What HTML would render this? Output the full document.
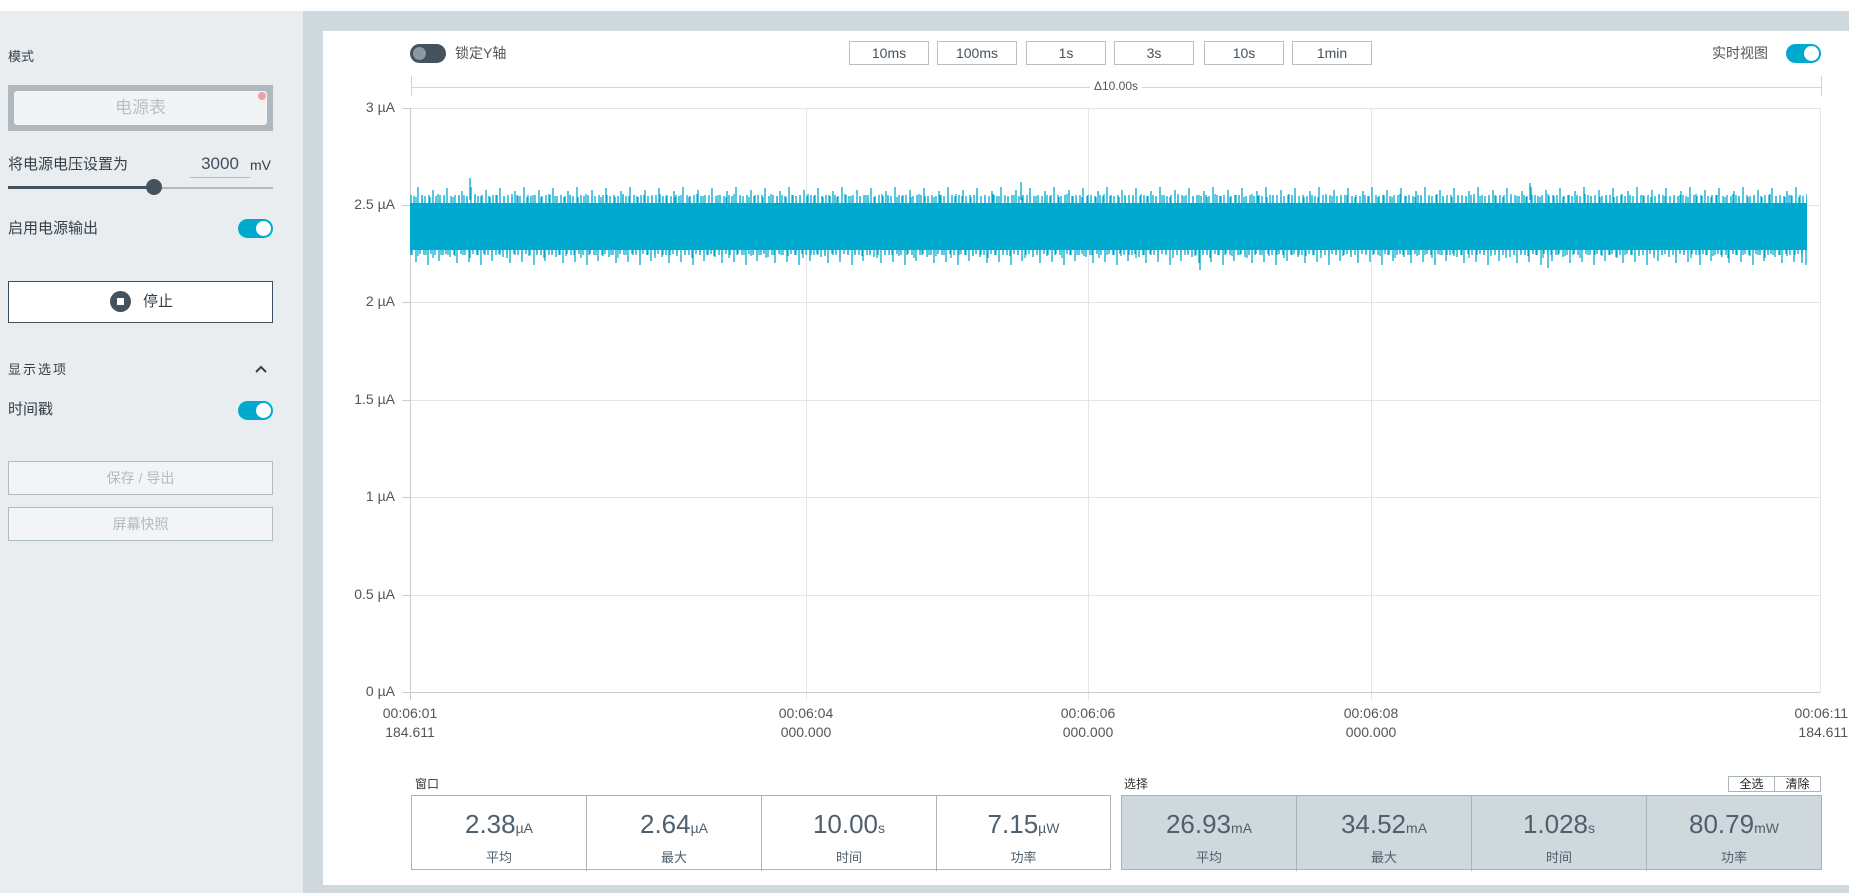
<!DOCTYPE html>
<html><head><meta charset="utf-8"><style>
*{margin:0;padding:0;box-sizing:border-box}
body{width:1849px;height:893px;position:relative;overflow:hidden;background:#cfd8dd;font-family:"Liberation Sans","Noto Sans CJK SC",sans-serif;color:#333f48}
.a{position:absolute}
.top{left:0;top:0;width:1849px;height:11px;background:#fff}
.left{left:0;top:11px;width:303px;height:882px;background:#e9edf0}
.card{left:323px;top:31px;width:1526px;height:854px;background:#fff}
.lbl{font-size:15px;color:#333f48;line-height:20px}
.tg{width:35px;height:19px;border-radius:10px;background:#00a9ce}
.tg::after{content:"";position:absolute;right:2px;top:2px;width:15px;height:15px;border-radius:50%;background:#fff}
.btn{border:1px solid #b0bcc4;background:#f2f4f6;color:#b3bac0;font-size:14px;text-align:center}
.tb{top:41px;width:80px;height:24px;border:1px solid #b5c0c7;font-size:14px;text-align:center;line-height:22px;color:#44525e}
.yl{font-size:14px;color:#555;text-align:right;width:60px;left:335px}
.xl{font-size:14px;color:#555;text-align:center;width:90px;line-height:19px}
.cell{position:absolute;top:0;height:75px;text-align:center;color:#4f5f6c}
.cell b{font-weight:normal;font-size:26px;display:block;margin-top:13px;line-height:30px}
.cell b i{font-style:normal;font-size:14px}
.cell span{font-size:13px;display:block;margin-top:4px}
</style></head><body>
<div class="a top"></div>
<div class="a left"></div>
<div class="a lbl" style="left:8px;top:47px;font-size:13px">模式</div>
<div class="a" style="left:8px;top:85px;width:265px;height:46px;background:#b0b8bf"></div>
<div class="a" style="left:14px;top:91px;width:253px;height:34px;background:#f1f3f5;border-radius:3px;text-align:center;line-height:34px;color:#b8bfc5;font-size:17px">电源表</div>
<div class="a" style="left:258px;top:92px;width:8px;height:8px;border-radius:50%;background:#eea0a4"></div>
<div class="a lbl" style="left:8px;top:155px">将电源电压设置为</div>
<div class="a" style="left:190px;top:153px;width:60px;text-align:center;font-size:17px;color:#44525e;line-height:22px">3000</div>
<div class="a" style="left:190px;top:177px;width:60px;height:1px;background:#b5bec5"></div>
<div class="a lbl" style="left:250px;top:155px;font-size:14px">mV</div>
<div class="a" style="left:8px;top:186px;width:146px;height:3px;background:#44525e"></div>
<div class="a" style="left:154px;top:187px;width:119px;height:2px;background:#b0bac1"></div>
<div class="a" style="left:146px;top:179px;width:16px;height:16px;border-radius:50%;background:#44525e"></div>
<div class="a lbl" style="left:8px;top:219px">启用电源输出</div>
<div class="a tg" style="left:238px;top:219px"></div>
<div class="a" style="left:8px;top:281px;width:265px;height:42px;border:1px solid #3d4f5e;background:#fff"></div>
<div class="a" style="left:110px;top:291px;width:21px;height:21px;border-radius:50%;background:#44525e"></div>
<div class="a" style="left:117px;top:298px;width:7px;height:7px;background:#fff"></div>
<div class="a lbl" style="left:143px;top:292px">停止</div>
<div class="a lbl" style="left:8px;top:360px;font-size:13px;letter-spacing:2px">显示选项</div>
<svg class="a" style="left:254px;top:364px" width="14" height="10"><path d="M2 8L7 3L12 8" stroke="#333f48" stroke-width="2" fill="none"/></svg>
<div class="a lbl" style="left:8px;top:400px">时间戳</div>
<div class="a tg" style="left:238px;top:401px"></div>
<div class="a btn" style="left:8px;top:461px;width:265px;height:34px;line-height:32px">保存 / 导出</div>
<div class="a btn" style="left:8px;top:507px;width:265px;height:34px;line-height:32px">屏幕快照</div>
<div class="a card"></div>
<div class="a" style="left:410px;top:44px;width:36px;height:19px;border-radius:10px;background:#44525e"></div>
<div class="a" style="left:413px;top:47px;width:13px;height:13px;border-radius:50%;background:#8a989f"></div>
<div class="a lbl" style="left:455px;top:43px;color:#555;font-size:14px">锁定Y轴</div>
<div class="a tb" style="left:849px">10ms</div>
<div class="a tb" style="left:937px">100ms</div>
<div class="a tb" style="left:1026px">1s</div>
<div class="a tb" style="left:1114px">3s</div>
<div class="a tb" style="left:1204px">10s</div>
<div class="a tb" style="left:1292px">1min</div>
<div class="a lbl" style="left:1712px;top:43px;color:#555;font-size:14px">实时视图</div>
<div class="a tg" style="left:1786px;top:44px"></div>
<svg class="a" style="left:0;top:0" width="1849" height="893">
 <defs>
  <pattern id="pt" patternUnits="userSpaceOnUse" width="53" height="80" x="410" y="185">
   <g stroke="#00a9ce" stroke-width="1.3">
   <path d="M1 10V20M4 11V20M8 2V20M12 10V20M15 11V20M19 10V20M23 5V20M26 11V20M30 10V20M34 10V20M37 3V20M41 11V20M45 10V20M49 11V20M52 6V20"/>
   <path d="M2 60V70M6 60V77M10 60V69M14 60V70M18 60V80M21 60V69M25 60V70M29 60V76M33 60V70M36 60V69M40 60V72M44 60V70M47 60V78M51 60V69"/>
   </g>
  </pattern>
  <pattern id="pt2" patternUnits="userSpaceOnUse" width="37" height="80" x="413" y="185">
   <g stroke="#00a9ce" stroke-width="1.2">
   <path d="M3 12V20M9 10V20M17 12V20M25 9V20M31 11V20"/>
   <path d="M5 60V71M13 60V70M20 60V73M28 60V70M35 60V70"/>
   </g>
  </pattern>
 </defs>
 <g stroke="#e3e6e8" stroke-width="1">
  <path d="M410 108.5H1820M410 205.5H1820M410 302.5H1820M410 400.5H1820M410 497.5H1820M410 595.5H1820"/>
  <path d="M806.5 108V700M1088.5 108V700M1371.5 108V700M1820.5 108V692"/>
 </g>
 <path d="M402 108.5H410M402 205.5H410M402 302.5H410M402 400.5H410M402 497.5H410M402 595.5H410M402 692.5H410" stroke="#ccc"/>
 <path d="M410 692.5H1820M410.5 108V700" stroke="#ccc"/>
 <path d="M411 87.5H1090M1142 87.5H1821M411.5 76V96M1821.5 76V96" stroke="#cfd6db"/>
 <rect x="410" y="203" width="1397" height="47" fill="#00a9ce"/>
 <rect x="410" y="185" width="1397" height="80" fill="url(#pt)"/>
 <rect x="410" y="185" width="1397" height="80" fill="url(#pt2)"/>
 <path d="M470 178V200M1021 182V200M1530 183V200M1200 250V270M1548 250V268M1802 248V263" stroke="#00a9ce" stroke-width="1.3"/>
</svg>
<div class="a" style="left:1090px;top:79px;width:52px;text-align:center;font-size:12px;color:#555">Δ10.00s</div>
<div class="a yl" style="top:99px">3 µA</div>
<div class="a yl" style="top:196px">2.5 µA</div>
<div class="a yl" style="top:293px">2 µA</div>
<div class="a yl" style="top:391px">1.5 µA</div>
<div class="a yl" style="top:488px">1 µA</div>
<div class="a yl" style="top:586px">0.5 µA</div>
<div class="a yl" style="top:683px">0 µA</div>
<div class="a xl" style="left:365px;top:704px">00:06:01<br>184.611</div>
<div class="a xl" style="left:761px;top:704px">00:06:04<br>000.000</div>
<div class="a xl" style="left:1043px;top:704px">00:06:06<br>000.000</div>
<div class="a xl" style="left:1326px;top:704px">00:06:08<br>000.000</div>
<div class="a xl" style="left:1758px;top:704px;text-align:right">00:06:11<br>184.611</div>
<div class="a" style="left:415px;top:775px;font-size:12px;color:#333">窗口</div>
<div class="a" style="left:1124px;top:775px;font-size:12px;color:#333">选择</div>
<div class="a" style="left:1728px;top:776px;width:47px;height:16px;border:1px solid #aab4bb;font-size:12px;text-align:center;line-height:14px;color:#222">全选</div>
<div class="a" style="left:1774px;top:776px;width:47px;height:16px;border:1px solid #aab4bb;font-size:12px;text-align:center;line-height:14px;color:#222">清除</div>
<div class="a" style="left:411px;top:795px;width:700px;height:75px;border:1px solid #aab4bb">
 <div class="cell" style="left:0;width:175px;border-right:1px solid #aab4bb"><b>2.38<i>µA</i></b><span>平均</span></div>
 <div class="cell" style="left:175px;width:175px;border-right:1px solid #aab4bb"><b>2.64<i>µA</i></b><span>最大</span></div>
 <div class="cell" style="left:350px;width:175px;border-right:1px solid #aab4bb"><b>10.00<i>s</i></b><span>时间</span></div>
 <div class="cell" style="left:525px;width:173px"><b>7.15<i>µW</i></b><span>功率</span></div>
</div>
<div class="a" style="left:1121px;top:795px;width:701px;height:75px;border:1px solid #aab4bb;background:#cfd8dd">
 <div class="cell" style="left:0;width:175px;border-right:1px solid #aab4bb"><b>26.93<i>mA</i></b><span>平均</span></div>
 <div class="cell" style="left:175px;width:175px;border-right:1px solid #aab4bb"><b>34.52<i>mA</i></b><span>最大</span></div>
 <div class="cell" style="left:350px;width:175px;border-right:1px solid #aab4bb"><b>1.028<i>s</i></b><span>时间</span></div>
 <div class="cell" style="left:525px;width:174px"><b>80.79<i>mW</i></b><span>功率</span></div>
</div>
</body></html>
